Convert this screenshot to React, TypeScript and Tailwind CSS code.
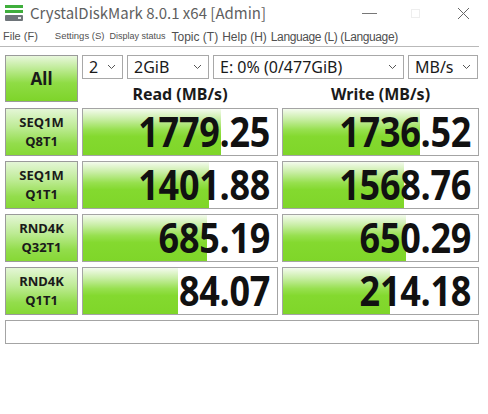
import React from 'react';

type Row = {
    name: string;
    sub: string;
    read: string;
    readPct: number;
    write: string;
    writePct: number;
};

const rows: Row[] = [
    { name: 'SEQ1M', sub: 'Q8T1', read: '1779.25', readPct: 71, write: '1736.52', writePct: 70 },
    { name: 'SEQ1M', sub: 'Q1T1', read: '1401.88', readPct: 65, write: '1568.76', writePct: 62 },
    { name: 'RND4K', sub: 'Q32T1', read: '685.19', readPct: 64, write: '650.29', writePct: 63 },
    { name: 'RND4K', sub: 'Q1T1', read: '84.07', readPct: 49, write: '214.18', writePct: 55 },
];

const green = 'bg-[linear-gradient(to_bottom,#f4fbee_0%,#c9eea6_22%,#97e04f_45%,#84d92f_60%,#7fd629_100%)]';

const Chevron = () => (
    <svg width="9" height="6" viewBox="0 0 9 6" className="shrink-0">
        <polyline points="1,1 4.5,4.5 8,1" fill="none" stroke="#555" strokeWidth="1" />
    </svg>
);

const Select = ({ value, className }: { value: string; className: string }) => (
    <div className={`h-[24px] border border-[#a8a8a8] bg-white flex items-center justify-between pl-[6px] pr-[6px] text-[16px] text-[#1a1a1a] ${className}`}>
        <span className="leading-none">{value}</span>
        <Chevron />
    </div>
);

const Bar = ({ value, pct }: { value: string; pct: number }) => (
    <div className="relative h-[48px] border border-[#a4a4a4] bg-white">
        <div className={`absolute left-0 top-0 bottom-0 ${green}`} style={{ width: `${pct}%` }} />
        <div className="relative h-full flex items-center justify-end pr-[7px] text-[36px] font-bold text-[#111] tracking-[-0.3px] leading-[46px] font-['Open_Sans',sans-serif]">
            <span className="scale-y-[1.12]">{value}</span>
        </div>
    </div>
);

export default function App() {
    return (
        <div className="w-[488px] h-[414px] bg-white overflow-hidden font-['Noto_Sans','Open_Sans',sans-serif]">
            {/* Title bar */}
            <div className="h-[27px] flex items-center pl-[4px] pr-[18px]">
                <svg width="20" height="17" viewBox="0 0 20 17" className="shrink-0">
                    <rect x="1" y="0" width="18" height="3" fill="#3fae3c" />
                    <rect x="1" y="5" width="18" height="3" fill="#3fae3c" />
                    <rect x="1" y="10" width="18" height="6" rx="1" fill="#6e7479" />
                    <rect x="14" y="12" width="3" height="2" fill="#e6e6e6" />
                </svg>
                <span className="ml-[6px] text-[15px] text-[#5f5f5f] font-['Noto_Sans_CJK_SC','Noto_Sans',sans-serif]">
                    CrystalDiskMark 8.0.1 x64 [Admin]
                </span>
                <div className="ml-auto flex items-center">
                    <div className="w-[15px] h-[1px] bg-[#777]" />
                    <div className="ml-[34px] w-[9px] h-[9px] border border-[#eeeeee]" />
                    <svg width="13" height="13" viewBox="0 0 13 13" className="ml-[37px]">
                        <path d="M1 1 L12 12 M12 1 L1 12" stroke="#666" strokeWidth="1" />
                    </svg>
                </div>
            </div>

            {/* Menu bar */}
            <div className="mr-[9px] h-[20px] flex items-center pl-[3px] border-b border-[#b9b9b9] text-[#505050] whitespace-nowrap font-['Liberation_Sans',sans-serif]">
                <span className="text-[11px]">File (F)</span>
                <span className="ml-[17px] text-[9.5px]">Settings (S)</span>
                <span className="ml-[5px] text-[9px]">Display status</span>
                <span className="ml-[6px] text-[12px]">Topic (T)</span>
                <span className="ml-[4px] text-[12px]">Help (H)</span>
                <span className="ml-[4px] text-[12px] tracking-[-0.4px]">Language (L) (Language)</span>
            </div>

            {/* Main panel */}
            <div className="pl-[5px] pt-[8px] w-[479px]">
                <div className="flex">
                    <div className="w-[73px] h-[47px] border border-[#9a9a9a] flex items-center justify-center text-[17px] font-bold text-[#1a1a1a] bg-[linear-gradient(to_bottom,#e8f7dc_0%,#b4e884_35%,#8fdc45_60%,#7ed42a_100%)]">
                        All
                    </div>
                    <div className="ml-[4px] flex-1">
                        <div className="flex gap-[4px]">
                            <Select value="2" className="w-[41px]" />
                            <Select value="2GiB" className="w-[82px]" />
                            <Select value="E: 0% (0/477GiB)" className="w-[191px]" />
                            <Select value="MB/s" className="w-[70px]" />
                        </div>
                        <div className="flex h-[29px] items-center text-[16px] font-bold text-[#1a1a1a]">
                            <div className="w-[196px] text-center">Read (MB/s)</div>
                            <div className="ml-[4px] flex-1 text-center">Write (MB/s)</div>
                        </div>
                    </div>
                </div>

                <div className="flex flex-col gap-[5px]">
                    {rows.map((r, i) => (
                        <div key={i} className="flex gap-[4px]">
                            <div className="w-[73px] h-[48px] border border-[#9a9a9a] flex flex-col items-center justify-center text-[13px] font-bold text-[#1a1a1a] leading-[19px] bg-[linear-gradient(to_bottom,#e4f6d6_0%,#bdeb94_40%,#93dd4c_75%,#86d835_100%)]">
                                <span>{r.name}</span>
                                <span>{r.sub}</span>
                            </div>
                            <div className="w-[196px]">
                                <Bar value={r.read} pct={r.readPct} />
                            </div>
                            <div className="flex-1">
                                <Bar value={r.write} pct={r.writePct} />
                            </div>
                        </div>
                    ))}
                </div>

                <div className="mt-[5px] h-[24px] border border-[#a4a4a4] bg-white" />
            </div>
        </div>
    );
}
